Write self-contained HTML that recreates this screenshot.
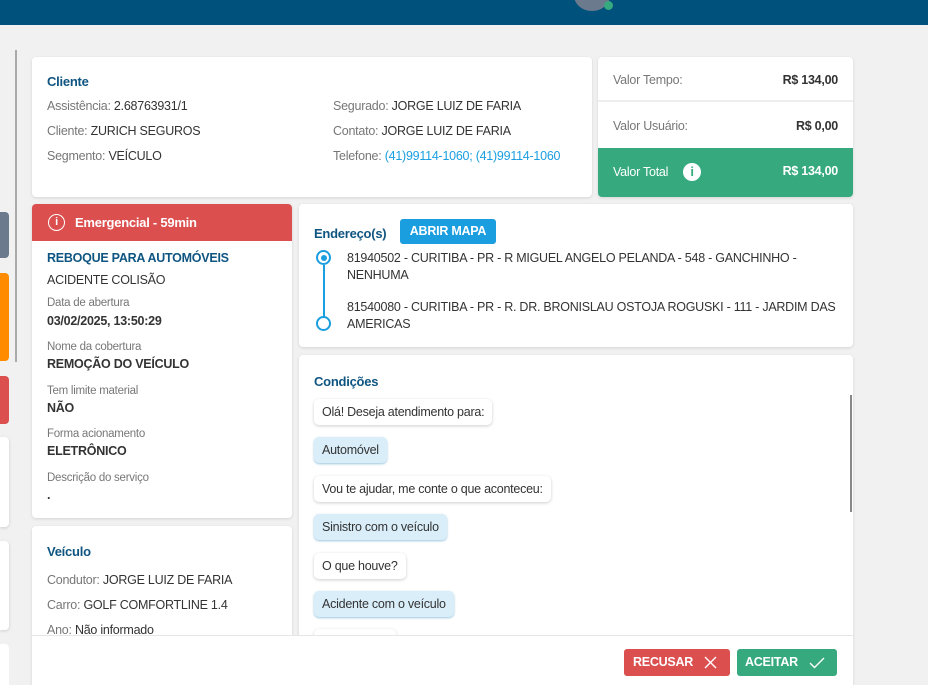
<!DOCTYPE html>
<html><head><meta charset="utf-8"><style>
*{box-sizing:border-box;margin:0;padding:0}
html,body{width:928px;height:685px;overflow:hidden}
body{background:#f1f1f1;font-family:"Liberation Sans",sans-serif;font-size:12.5px;letter-spacing:-0.25px;color:#333;position:relative}
.abs{position:absolute}
.card{position:absolute;background:#fff;border-radius:4px;box-shadow:0 1px 3px rgba(0,0,0,.12)}
.t{color:#0f5581;font-weight:bold;font-size:13px}
.g{color:#777}
.lbl{font-size:11.5px;color:#777}
.val{font-weight:bold;color:#333;font-size:12.5px}
.b{position:absolute;left:15px;padding:6px 8px;border-radius:5px;background:#fff;box-shadow:0 1px 3px rgba(0,0,0,.2);font-size:12.5px}
.u{background:#d9eef9;box-shadow:0 1px 2px rgba(0,110,170,.4)}
</style></head><body>
<div class="abs" style="left:0;top:0;width:928px;height:25px;background:#00527c"></div>
<div class="abs" style="left:574px;top:-20px;width:36px;height:31px;border-radius:50%;background:#6b7a8c"></div>
<div class="abs" style="left:604px;top:1px;width:9px;height:9px;border-radius:50%;background:#36aa7e"></div>
<div class="abs" style="left:15px;top:50px;width:2px;height:312px;background:#aaa"></div>
<div class="abs" style="left:0;top:212px;width:9px;height:46px;background:#6b7a8c;border-radius:0 4px 4px 0"></div>
<div class="abs" style="left:0;top:273px;width:9px;height:88px;background:#ff8c00;border-radius:0 4px 4px 0"></div>
<div class="abs" style="left:0;top:376px;width:9px;height:48px;background:#db4f4f;border-radius:0 4px 4px 0"></div>
<div class="abs" style="left:0;top:437px;width:9px;height:90px;background:#fff;border-radius:0 4px 4px 0;box-shadow:0 1px 3px rgba(0,0,0,.15)"></div>
<div class="abs" style="left:0;top:541px;width:9px;height:89px;background:#fff;border-radius:0 4px 4px 0;box-shadow:0 1px 3px rgba(0,0,0,.15)"></div>
<div class="abs" style="left:0;top:644px;width:9px;height:41px;background:#fff;border-radius:0 4px 0 0"></div>

<div class="card" style="left:32px;top:57px;width:560px;height:140px">
<div class="abs t" style="left:15px;top:17px">Cliente</div>
<div class="abs" style="left:15px;top:42px"><span class="g">Assistência:</span> 2.68763931/1</div>
<div class="abs" style="left:15px;top:67px"><span class="g">Cliente:</span> ZURICH SEGUROS</div>
<div class="abs" style="left:15px;top:92px"><span class="g">Segmento:</span> VEÍCULO</div>
<div class="abs" style="left:301px;top:42px"><span class="g">Segurado:</span> JORGE LUIZ DE FARIA</div>
<div class="abs" style="left:301px;top:67px"><span class="g">Contato:</span> JORGE LUIZ DE FARIA</div>
<div class="abs" style="left:301px;top:92px"><span class="g">Telefone:</span> <span style="color:#1a9ee0">(41)99114-1060; (41)99114-1060</span></div>
</div>

<div class="card" style="left:598px;top:57px;width:255px;height:140px;overflow:hidden">
<div class="abs g" style="left:15px;top:16px">Valor Tempo:</div>
<div class="abs val" style="right:15px;top:16px">R$ 134,00</div>
<div class="abs" style="left:0;top:43px;width:255px;height:2px;background:#eee"></div>
<div class="abs g" style="left:15px;top:62px">Valor Usuário:</div>
<div class="abs val" style="right:15px;top:62px">R$ 0,00</div>
<div class="abs" style="left:0;top:91px;width:255px;height:49px;background:#36aa7e;color:#fff">
<div class="abs" style="left:15px;top:17px">Valor Total</div>
<div class="abs" style="left:85px;top:15px;width:18px;height:18px;border-radius:50%;background:#fff;color:#36aa7e;font-weight:bold;font-size:13px;text-align:center;line-height:18px">i</div>
<div class="abs" style="right:15px;top:16px;font-weight:bold">R$ 134,00</div>
</div></div>

<div class="card" style="left:32px;top:204px;width:260px;height:314px;overflow:hidden">
<div class="abs" style="left:0;top:0;width:260px;height:37px;background:#db4f4f;color:#fff;font-weight:bold;font-size:13px">
<div class="abs" style="left:16px;top:10px;width:17px;height:17px;border:1.5px solid #fff;border-radius:50%;text-align:center;font-size:11px;line-height:14px">i</div>
<div class="abs" style="left:43px;top:11px">Emergencial - 59min</div></div>
<div class="abs t" style="left:15px;top:47px;font-size:12.5px">REBOQUE PARA AUTOMÓVEIS</div>
<div class="abs" style="left:15px;top:69px">ACIDENTE COLISÃO</div>
<div class="abs lbl" style="left:15px;top:93px">Data de abertura</div>
<div class="abs val" style="left:15px;top:110px">03/02/2025, 13:50:29</div>
<div class="abs lbl" style="left:15px;top:137px">Nome da cobertura</div>
<div class="abs val" style="left:15px;top:153px">REMOÇÃO DO VEÍCULO</div>
<div class="abs lbl" style="left:15px;top:181px">Tem limite material</div>
<div class="abs val" style="left:15px;top:197px">NÃO</div>
<div class="abs lbl" style="left:15px;top:224px">Forma acionamento</div>
<div class="abs val" style="left:15px;top:240px">ELETRÔNICO</div>
<div class="abs lbl" style="left:15px;top:268px">Descrição do serviço</div>
<div class="abs val" style="left:15px;top:284px">.</div>
</div>

<div class="card" style="left:32px;top:526px;width:260px;height:170px">
<div class="abs t" style="left:15px;top:18px">Veículo</div>
<div class="abs" style="left:15px;top:47px"><span class="g">Condutor:</span> JORGE LUIZ DE FARIA</div>
<div class="abs" style="left:15px;top:72px"><span class="g">Carro:</span> GOLF COMFORTLINE 1.4</div>
<div class="abs" style="left:15px;top:97px"><span class="g">Ano:</span> Não informado</div>
</div>

<div class="card" style="left:299px;top:204px;width:554px;height:143px">
<div class="abs t" style="left:15px;top:22px">Endereço(s)</div>
<div class="abs" style="left:101px;top:15px;width:96px;height:25px;background:#1a9ee0;border-radius:3px;color:#fff;font-weight:bold;font-size:12.5px;text-align:center;line-height:25px">ABRIR MAPA</div>
<div class="abs" style="left:17px;top:46px;width:15px;height:15px;border:2px solid #1a9ee0;border-radius:50%"><div style="margin:2.5px;width:6px;height:6px;border-radius:50%;background:#1a9ee0"></div></div>
<div class="abs" style="left:23.5px;top:61px;width:2px;height:52px;background:#1a9ee0"></div>
<div class="abs" style="left:17px;top:112px;width:15px;height:15px;border:2px solid #1a9ee0;border-radius:50%"></div>
<div class="abs" style="left:48px;top:46px;width:470px;line-height:17px">81940502 - CURITIBA - PR - R MIGUEL ANGELO PELANDA - 548 - GANCHINHO - NENHUMA</div>
<div class="abs" style="left:48px;top:95px;width:500px;line-height:17px">81540080 - CURITIBA - PR - R. DR. BRONISLAU OSTOJA ROGUSKI - 111 - JARDIM DAS AMERICAS</div>
</div>

<div class="card" style="left:299px;top:355px;width:554px;height:340px;overflow:hidden">
<div class="abs t" style="left:15px;top:19px">Condições</div>
<div class="b" style="top:44px">Olá! Deseja atendimento para:</div>
<div class="b u" style="top:82px">Automóvel</div>
<div class="b" style="top:121px">Vou te ajudar, me conte o que aconteceu:</div>
<div class="b u" style="top:159px">Sinistro com o veículo</div>
<div class="b" style="top:198px">O que houve?</div>
<div class="b u" style="top:236px">Acidente com o veículo</div>
<div class="b" style="top:274px;width:82px;height:26px"></div>
<div class="abs" style="left:551px;top:40px;width:2px;height:117px;background:#888"></div>
</div>

<div class="abs" style="left:32px;top:635px;width:821px;height:50px;background:#fff;border-top:1px solid #e6e6e6">
<div class="abs" style="left:592px;top:13px;width:106px;height:27px;background:#db4f4f;border-radius:3px;color:#fff;font-weight:bold;font-size:12.5px;line-height:27px;padding-left:9px">RECUSAR
<svg class="abs" style="left:80px;top:7px" width="13" height="13" viewBox="0 0 13 13"><path d="M1 1L12 12M12 1L1 12" stroke="#fff" stroke-width="1.4" fill="none"/></svg></div>
<div class="abs" style="left:705px;top:13px;width:100px;height:27px;background:#36aa7e;border-radius:3px;color:#fff;font-weight:bold;font-size:12.5px;line-height:27px;padding-left:8px">ACEITAR
<svg class="abs" style="left:72px;top:8px" width="16" height="12" viewBox="0 0 16 12"><path d="M1 6L5.5 10.5L15 1" stroke="#fff" stroke-width="1.4" fill="none"/></svg></div>
</div>
</body></html>
